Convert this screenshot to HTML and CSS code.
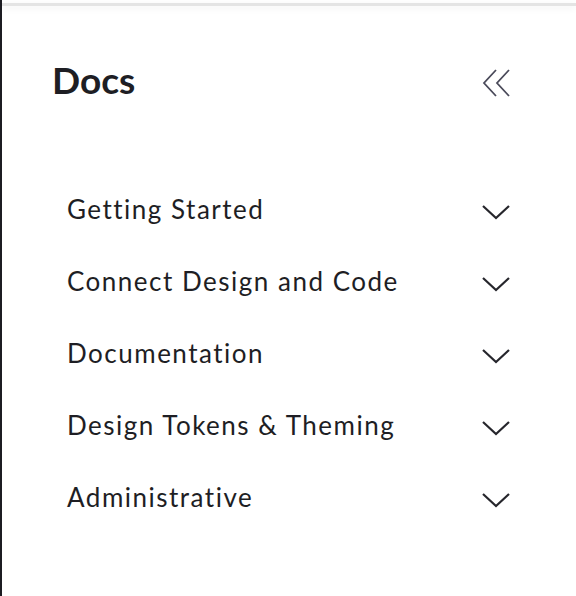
FILE: index.html
```html
<!DOCTYPE html>
<html>
<head>
<meta charset="utf-8">
<link rel="stylesheet" href="styles.css">
</head>
<body>
<div class="frame">
  <div class="topbar"></div>
  <div class="panel">
    <div class="head">
      <h1 class="title">Docs</h1>
      <button class="collapse" aria-label="Collapse">
        <svg width="30" height="30" viewBox="0 0 30 30"><path d="M14 2 L2 15 L14 28 M27 2 L15 15 L27 28" fill="none" stroke="#4a4a5a" stroke-width="1.8"/></svg>
      </button>
    </div>
    <ul class="nav">
      <li class="item"><span>Getting Started</span><svg class="chev" width="30" height="16" viewBox="0 0 30 16"><path d="M2 2 L15 14 L28 2" fill="none" stroke="#26262c" stroke-width="2.2"/></svg></li>
      <li class="item"><span>Connect Design and Code</span><svg class="chev" width="30" height="16" viewBox="0 0 30 16"><path d="M2 2 L15 14 L28 2" fill="none" stroke="#26262c" stroke-width="2.2"/></svg></li>
      <li class="item"><span>Documentation</span><svg class="chev" width="30" height="16" viewBox="0 0 30 16"><path d="M2 2 L15 14 L28 2" fill="none" stroke="#26262c" stroke-width="2.2"/></svg></li>
      <li class="item"><span>Design Tokens &amp; Theming</span><svg class="chev" width="30" height="16" viewBox="0 0 30 16"><path d="M2 2 L15 14 L28 2" fill="none" stroke="#26262c" stroke-width="2.2"/></svg></li>
      <li class="item"><span>Administrative</span><svg class="chev" width="30" height="16" viewBox="0 0 30 16"><path d="M2 2 L15 14 L28 2" fill="none" stroke="#26262c" stroke-width="2.2"/></svg></li>
    </ul>
  </div>
</div>
</body>
</html>
```
FILE: styles.css
```css
html, body {
  margin: 0;
  padding: 0;
  background: #ffffff;
}
.frame {
  height: 596px;
  border-left: 2px solid #1c1c22;
  box-sizing: border-box;
  overflow: hidden;
  font-family: "Lato", "Open Sans", sans-serif;
  color: #1e1e24;
}
.topbar {
  margin-top: 3px;
  height: 3px;
  background: #e4e4e4;
  box-shadow: 0 2px 7px rgba(0, 0, 0, 0.07);
}
.panel {
  padding: 0 65px 0 50px;
}
.head {
  display: flex;
  justify-content: space-between;
  align-items: center;
  margin-top: 48px;
  height: 50px;
}
.title {
  margin: 0;
  font-size: 37px;
  font-weight: 700;
  letter-spacing: 0;
}
.collapse {
  border: 0;
  background: none;
  padding: 0;
  width: 30px;
  height: 30px;
  display: flex;
  margin-right: -1px;
  margin-top: 7px;
}
.nav {
  list-style: none;
  margin: 70px 0 0 0;
  padding: 0 0 0 15px;
}
.item {
  display: flex;
  justify-content: space-between;
  align-items: center;
  height: 72px;
  font-size: 26px;
  letter-spacing: 1.5px;
}
.item span {
  margin-top: -3px;
}
.chev {
  display: block;
  margin-top: 3px;
}
```
